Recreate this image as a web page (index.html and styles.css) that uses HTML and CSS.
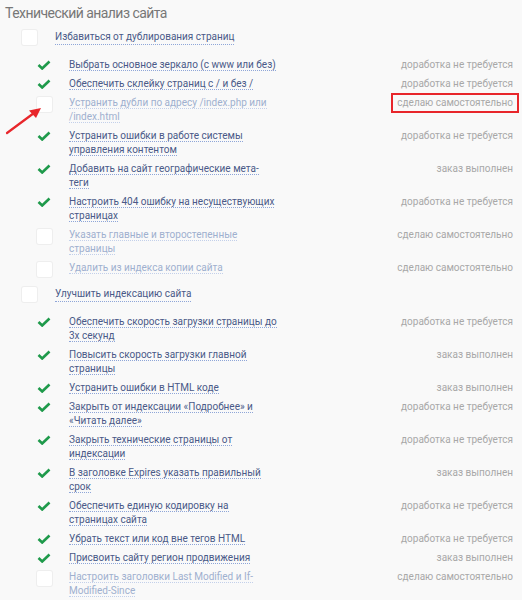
FILE: index.html
```html
<!DOCTYPE html>
<html lang="ru">
<head>
<meta charset="utf-8">
<link rel="stylesheet" href="styles.css">
</head>
<body>
<div class="page">
  <h1 class="title">Технический анализ сайта</h1>

  <section class="group">
    <div class="group-head"><span class="box"></span><a class="link">Избавиться от дублирования страниц</a></div>
    <ul class="items">
      <li class="item"><span class="mark"><svg viewBox="0 0 14 10" width="14" height="10"><path d="M1.5 5 L5.2 8.5 L12.5 1.5" fill="none" stroke="#1f9a4b" stroke-width="2.6"/></svg></span><span class="label"><a class="link">Выбрать основное зеркало (с www или без)</a></span><span class="status">доработка не требуется</span></li>
      <li class="item"><span class="mark"><svg viewBox="0 0 14 10" width="14" height="10"><path d="M1.5 5 L5.2 8.5 L12.5 1.5" fill="none" stroke="#1f9a4b" stroke-width="2.6"/></svg></span><span class="label"><a class="link">Обеспечить склейку страниц с / и без /</a></span><span class="status">доработка не требуется</span></li>
      <li class="item off"><span class="mark"><span class="box"></span></span><span class="label"><a class="link">Устранить дубли по адресу /index.php или<br>/index.html</a></span><span class="status"><span class="hl">сделаю самостоятельно</span></span></li>
      <li class="item"><span class="mark"><svg viewBox="0 0 14 10" width="14" height="10"><path d="M1.5 5 L5.2 8.5 L12.5 1.5" fill="none" stroke="#1f9a4b" stroke-width="2.6"/></svg></span><span class="label"><a class="link">Устранить ошибки в работе системы<br>управления контентом</a></span><span class="status">доработка не требуется</span></li>
      <li class="item"><span class="mark"><svg viewBox="0 0 14 10" width="14" height="10"><path d="M1.5 5 L5.2 8.5 L12.5 1.5" fill="none" stroke="#1f9a4b" stroke-width="2.6"/></svg></span><span class="label"><a class="link">Добавить на сайт географические мета-<br>теги</a></span><span class="status">заказ выполнен</span></li>
      <li class="item"><span class="mark"><svg viewBox="0 0 14 10" width="14" height="10"><path d="M1.5 5 L5.2 8.5 L12.5 1.5" fill="none" stroke="#1f9a4b" stroke-width="2.6"/></svg></span><span class="label"><a class="link">Настроить 404 ошибку на несуществующих<br>страницах</a></span><span class="status">доработка не требуется</span></li>
      <li class="item off"><span class="mark"><span class="box"></span></span><span class="label"><a class="link">Указать главные и второстепенные<br>страницы</a></span><span class="status">сделаю самостоятельно</span></li>
      <li class="item off"><span class="mark"><span class="box"></span></span><span class="label"><a class="link">Удалить из индекса копии сайта</a></span><span class="status">сделаю самостоятельно</span></li>
    </ul>
  </section>

  <section class="group">
    <div class="group-head"><span class="box"></span><a class="link">Улучшить индексацию сайта</a></div>
    <ul class="items">
      <li class="item"><span class="mark"><svg viewBox="0 0 14 10" width="14" height="10"><path d="M1.5 5 L5.2 8.5 L12.5 1.5" fill="none" stroke="#1f9a4b" stroke-width="2.6"/></svg></span><span class="label"><a class="link">Обеспечить скорость загрузки страницы до<br>3х секунд</a></span><span class="status">доработка не требуется</span></li>
      <li class="item"><span class="mark"><svg viewBox="0 0 14 10" width="14" height="10"><path d="M1.5 5 L5.2 8.5 L12.5 1.5" fill="none" stroke="#1f9a4b" stroke-width="2.6"/></svg></span><span class="label"><a class="link">Повысить скорость загрузки главной<br>страницы</a></span><span class="status">заказ выполнен</span></li>
      <li class="item"><span class="mark"><svg viewBox="0 0 14 10" width="14" height="10"><path d="M1.5 5 L5.2 8.5 L12.5 1.5" fill="none" stroke="#1f9a4b" stroke-width="2.6"/></svg></span><span class="label"><a class="link">Устранить ошибки в HTML коде</a></span><span class="status">заказ выполнен</span></li>
      <li class="item"><span class="mark"><svg viewBox="0 0 14 10" width="14" height="10"><path d="M1.5 5 L5.2 8.5 L12.5 1.5" fill="none" stroke="#1f9a4b" stroke-width="2.6"/></svg></span><span class="label"><a class="link">Закрыть от индексации «Подробнее» и<br>«Читать далее»</a></span><span class="status">доработка не требуется</span></li>
      <li class="item"><span class="mark"><svg viewBox="0 0 14 10" width="14" height="10"><path d="M1.5 5 L5.2 8.5 L12.5 1.5" fill="none" stroke="#1f9a4b" stroke-width="2.6"/></svg></span><span class="label"><a class="link">Закрыть технические страницы от<br>индексации</a></span><span class="status">доработка не требуется</span></li>
      <li class="item"><span class="mark"><svg viewBox="0 0 14 10" width="14" height="10"><path d="M1.5 5 L5.2 8.5 L12.5 1.5" fill="none" stroke="#1f9a4b" stroke-width="2.6"/></svg></span><span class="label"><a class="link">В заголовке Expires указать правильный<br>срок</a></span><span class="status">заказ выполнен</span></li>
      <li class="item"><span class="mark"><svg viewBox="0 0 14 10" width="14" height="10"><path d="M1.5 5 L5.2 8.5 L12.5 1.5" fill="none" stroke="#1f9a4b" stroke-width="2.6"/></svg></span><span class="label"><a class="link">Обеспечить единую кодировку на<br>страницах сайта</a></span><span class="status">доработка не требуется</span></li>
      <li class="item"><span class="mark"><svg viewBox="0 0 14 10" width="14" height="10"><path d="M1.5 5 L5.2 8.5 L12.5 1.5" fill="none" stroke="#1f9a4b" stroke-width="2.6"/></svg></span><span class="label"><a class="link">Убрать текст или код вне тегов HTML</a></span><span class="status">доработка не требуется</span></li>
      <li class="item"><span class="mark"><svg viewBox="0 0 14 10" width="14" height="10"><path d="M1.5 5 L5.2 8.5 L12.5 1.5" fill="none" stroke="#1f9a4b" stroke-width="2.6"/></svg></span><span class="label"><a class="link">Присвоить сайту регион продвижения</a></span><span class="status">заказ выполнен</span></li>
      <li class="item off"><span class="mark"><span class="box"></span></span><span class="label"><a class="link">Настроить заголовки Last Modified и If-<br>Modified-Since</a></span><span class="status">сделаю самостоятельно</span></li>
    </ul>
  </section>

  <svg class="arrow" width="50" height="40" viewBox="0 0 50 40">
    <path d="M7 33 L34 13" stroke="#e8262b" stroke-width="2.2" fill="none" stroke-linecap="round"/>
    <path d="M41 8 L29 10.5 L36 18 Z" fill="#e8262b"/>
  </svg>
</div>
</body>
</html>
```

FILE: styles.css
```css
html, body {
  margin: 0;
  padding: 0;
  background: #f9f9f9;
}
body {
  font-family: Roboto, "Liberation Sans", sans-serif;
  font-size: 10px;
  color: #333;
}
.page {
  position: relative;
  padding: 3px 9px 0 5px;
}
.title {
  margin: 0;
  font-size: 14px;
  letter-spacing: -0.55px;
  font-weight: normal;
  line-height: 21px;
  color: #777;
}
.group {
  margin-top: 5px;
}
.group + .group {
  margin-top: 11.5px;
}
.group-head {
  display: flex;
  align-items: center;
  padding-left: 17px;
  height: 17px;
}
.group-head .box {
  margin-right: 18px;
}
.box {
  display: inline-block;
  width: 15px;
  height: 15px;
  background: #fff;
  border-radius: 2px;
  box-shadow: 0 0 0 1px #eeeeee;
}
.link {
  color: #4a5988;
  text-decoration: none;
  border-bottom: 1px dotted #8fa6d8;
  line-height: 14px;
}
.items {
  list-style: none;
  margin: 0;
  padding: 11.5px 0 0 0;
  display: flex;
  flex-direction: column;
  gap: 5px;
}
.item {
  display: flex;
  align-items: flex-start;
  line-height: 14px;
}
.mark {
  width: 32px;
  margin-left: 32px;
  flex: none;
  height: 14px;
  display: flex;
  align-items: center;
}
.item .mark .box {
  margin-top: 3px;
}
.label {
  width: 250px;
  flex: none;
}
.status {
  flex: 1;
  text-align: right;
  color: #a8a8a8;
}
.item.off .link {
  color: #9fb0cf;
  border-bottom-color: #c3d0ea;
}
.hl {
  display: inline-block;
  border: 2px solid #e8262b;
  padding: 1px 4px;
  margin: -3px -6px -3px 0;
}
.arrow {
  position: absolute;
  left: 0;
  top: 100px;
}
```
